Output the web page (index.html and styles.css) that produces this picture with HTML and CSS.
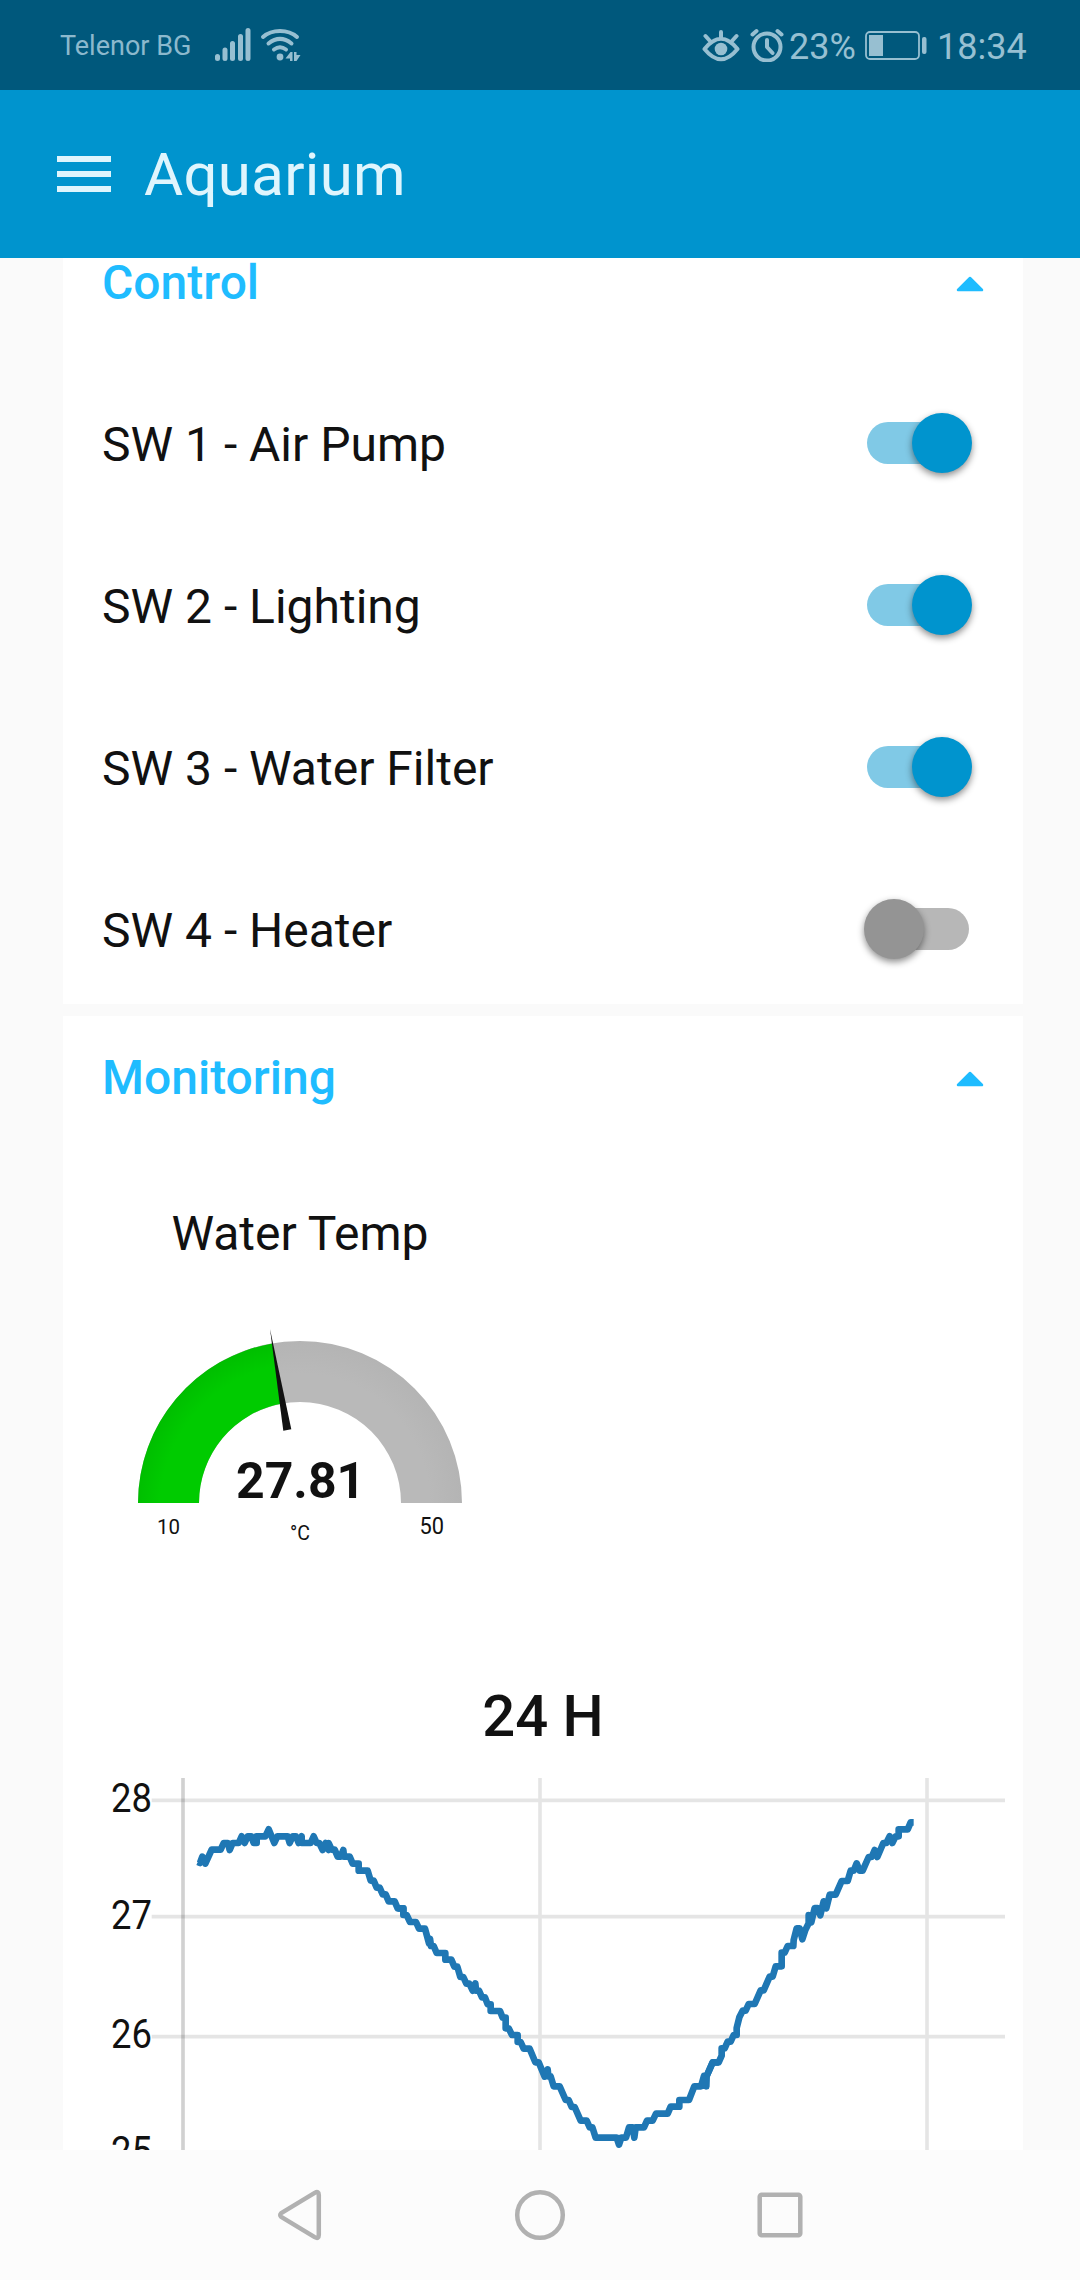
FILE: index.html
```html
<!DOCTYPE html>
<html lang="en">
<head>
<meta charset="utf-8">
<title>Aquarium</title>
<link rel="stylesheet" href="styles.css">
</head>
<body>
<div class="screen">
  <div class="status">
    <span class="carrier">Telenor BG</span>
    <svg class="signal" width="36" height="36" viewBox="0 0 36 36"><path d="M2.500 30.500v2M10 24v8.500M17.500 17.500v15M25.500 10.500v22M33 4.500v28"/></svg>
    <svg class="wifi" width="42" height="36" viewBox="0 0 42 36">
      <path d="M3 11C12 3 28 3 37 11M8.500 17.500C16 11.500 24 11.500 31.500 17.500M14 23.500C18 20.500 22 20.500 26 23.500"/>
      <circle class="solid" cx="20" cy="31" r="3.400"/>
      <path class="solid" d="M25.500 32.500L30.500 26H32.500V35H30V32.500ZM34 26H36.500V29H40.500L36.500 35H34Z"/>
    </svg>
    <span class="spacer"></span>
    <svg class="eye" width="38" height="36" viewBox="0 0 38 36">
      <path d="M2.500 23Q19 2.500 35.500 23Q19 43.500 2.500 23ZM19 6v6M3.500 10l4.500 5M34.500 10l-4.500 5"/>
      <circle class="solid" cx="19" cy="23" r="6.300"/>
    </svg>
    <svg class="alarm" width="34" height="36" viewBox="0 0 34 36">
      <circle cx="17" cy="21" r="13.500"/>
      <path d="M17 14v7l5.500 6M2.500 8.500l4-3.500M31.500 8.500l-4-3.500"/>
    </svg>
    <span class="percent">23%</span>
    <svg class="battery" width="62" height="32" viewBox="0 0 62 32">
      <rect class="case" x="1" y="3" width="53" height="27" rx="4"/>
      <rect class="solid" x="4" y="6" width="14" height="21"/>
      <rect class="solid" x="57" y="8" width="4.500" height="17" rx="2"/>
    </svg>
    <span class="time">18:34</span>
  </div>

  <header class="appbar">
    <button class="menu" aria-label="Menu"><i></i><i></i><i></i></button>
    <h1>Aquarium</h1>
  </header>

  <main class="content">
    <section class="card control">
      <div class="card-head"><h2>Control</h2><svg class="caret" width="28" height="16" viewBox="0 0 28 16"><path d="M14 2L26 14H2Z"/></svg></div>
      <div class="switches">
        <div class="row"><span class="label">SW 1 - Air Pump</span><span class="switch on"><b></b></span></div>
        <div class="row"><span class="label">SW 2 - Lighting</span><span class="switch on"><b></b></span></div>
        <div class="row"><span class="label">SW 3 - Water Filter</span><span class="switch on"><b></b></span></div>
        <div class="row"><span class="label">SW 4 - Heater</span><span class="switch"><b></b></span></div>
      </div>
    </section>

    <section class="card">
      <div class="card-head"><h2>Monitoring</h2><svg class="caret" width="28" height="16" viewBox="0 0 28 16"><path d="M14 2L26 14H2Z"/></svg></div>
      <div class="gauge">
        <p class="gauge-title">Water Temp</p>
        <svg width="350" height="240" viewBox="125 1310 350 240">
          <defs>
            <radialGradient id="green" gradientUnits="userSpaceOnUse" cx="306" cy="1509" r="172"><stop offset=".85" stop-color="#00cb00"/><stop offset="1" stop-color="#00bd00"/></radialGradient>
            <radialGradient id="grey" gradientUnits="userSpaceOnUse" cx="300" cy="1503" r="162"><stop offset=".8" stop-color="#b9b9b9"/><stop offset="1" stop-color="#b4b4b4"/></radialGradient>
          </defs>
          <path fill="url(#grey)" d="M138 1503A162 162 0 0 1 462 1503H401A101 101 0 0 0 199 1503Z"/>
          <path fill="url(#green)" d="M138 1503A162 162 0 0 1 272.300 1343.400L282.700 1403.500A101 101 0 0 0 199 1503Z"/>
          <path fill="#111" d="M270 1329L291.300 1429.300L283.300 1430.700Z"/>
          <text class="value" x="236" y="1498">27.81</text>
          <text class="bound-min" x="157" y="1534" textLength="23" lengthAdjust="spacingAndGlyphs">10</text>
          <text class="unit" x="290" y="1539.500" textLength="20" lengthAdjust="spacingAndGlyphs">°C</text>
          <text class="bound-max" x="419.500" y="1534" textLength="24.500" lengthAdjust="spacingAndGlyphs">50</text>
        </svg>
      </div>
      <h3 class="chart-title">24 H</h3>
      <svg class="chart" width="960" height="382" viewBox="9 324 2880 1146">
        <g class="grid">
          <path d="M275 421H2835M275 770H2835M275 1130H2835M1440 354V1470M2601 354V1470"/>
          <path class="axis" d="M369 354V1470"/>
        </g>
        <g class="ticks">
          <text x="153" y="457" textLength="123" lengthAdjust="spacingAndGlyphs">28</text>
          <text x="153" y="806" textLength="123" lengthAdjust="spacingAndGlyphs">27</text>
          <text x="153" y="1165" textLength="123" lengthAdjust="spacingAndGlyphs">26</text>
          <text x="153" y="1515" textLength="123" lengthAdjust="spacingAndGlyphs">25</text>
        </g>
        <g class="line">
          <polyline points="413,606 420,609 427,590 436,611 455,569 482,569 491,549 504,549 509,570 518,549 536,549 545,529 554,549 563,529 574,529 581,549 590,549 590,529 616,529 626,508 643,549 652,529 683,529 689,549 698,529 708,529 716,549 725,529 725,549 752,549 761,529 770,549 778,549 788,570 797,549 806,570 806,549 815,569 824,569 833,590 842,590 850,570 852,590 869,590 878,611 896,611 896,632 923,632 932,662 941,662 950,683 959,683 968,703 977,703 986,724 1004,724 1013,745 1030,745 1030,765"/>
          <polyline transform="translate(960)" points="53,745 70,745 70,765 80,765 90,786 108,786 117,806 135,806 147,850 150,836 153,858 161,858 170,879 196,879 196,899 214,899 223,920 232,920 241,951 250,951 259,971 268,971 278,992 286,970 288,992 297,992 306,1012 315,1012 323,1033 332,1033 332,1053 360,1053 368,1073 377,1073 377,1105 386,1105 396,1125 413,1125 413,1146 422,1146 431,1166 449,1166 466,1207 476,1207 494,1250 503,1228 505,1249 512,1249 521,1279 539,1279 557,1320 566,1320 575,1341 584,1341 602,1382 620,1382 629,1402 637,1402 647,1433 710,1433 717,1454 724,1433 738,1433 747,1402 758,1402 763,1433 767,1402 792,1402 801,1382 818,1382 828,1361 863,1361 872,1340 898,1340 898,1320 927,1320 943,1279 963,1279 972,1248 979,1279 980,1248 998,1207 1016,1207"/>
          <polyline transform="translate(1860 300)" points="80,948 98,907 116,907 125,887 125,865 134,865 143,845 152,845 161,825 170,825 170,804 178,772 188,752 197,752 206,732 224,732 242,691 251,691 269,650 278,650 287,619 305,619 305,578 314,578 323,558 340,558 341,540 350,505 359,505 367,538 376,510 386,490 386,465 394,487 404,444 413,444 421,466 431,424 439,445 449,404 467,404 485,363 503,363 512,332 521,332 530,310 539,332 548,332 566,291 575,291 584,270 592,291 610,249 619,249 629,229 637,249 647,229 656,229 656,208 683,208 692,187 701,187"/>
        </g>
      </svg>
    </section>
  </main>

  <nav class="navbar">
    <svg width="60" height="60" viewBox="0 0 60 60"><path d="M11.200 28.200L44.700 7.900Q48.800 5.600 48.800 10V50Q48.800 54.400 44.700 52.100L11.200 31.800Q9.200 30 11.200 28.200Z"/></svg>
    <svg width="60" height="60" viewBox="0 0 60 60"><circle cx="30" cy="30" r="22.800"/></svg>
    <svg width="60" height="60" viewBox="0 0 60 60"><rect x="9.700" y="9.700" width="40.600" height="40.600" rx="2"/></svg>
  </nav>
</div>
</body>
</html>
```
FILE: styles.css
```css
* { box-sizing: border-box; }
body { margin: 0; font-family: Roboto, "Noto Sans", sans-serif; color: #111; background: #fafafa; }
h1, h2, h3, p { margin: 0; font-weight: 400; }
.screen { width: 1080px; height: 2280px; display: flex; flex-direction: column; overflow: hidden; }

.status { height: 90px; flex: none; display: flex; align-items: center; padding: 2px 54px 0 60px; background: #00587c; color: #97c0d2; white-space: nowrap; }
.status svg { fill: none; stroke: #97bfd1; stroke-width: 4; stroke-linecap: round; stroke-linejoin: round; flex: none; }
.status .signal { margin-left: 24px; stroke-width: 5; margin-top: -4px; }
.status .wifi { margin-left: 9px; margin-top: -4px; }
.status .solid { fill: #97bfd1; stroke: none; }
.status .case { stroke-width: 1.800; }
.status .eye { margin-top: -4px; }
.status .alarm { margin-left: 10px; margin-top: -4px; }
.status .battery { margin-left: 11px; margin-top: -2px; }
.carrier { font-size: 27px; color: #8cb9cd; width: 131px; }
.spacer { flex: 1; }
.percent { font-size: 36px; margin-left: 5px; width: 65px; padding-top: 2px; }
.time { font-size: 36px; margin-left: 10px; width: 89px; padding-top: 2px; }

.appbar { height: 168px; flex: none; display: flex; align-items: center; gap: 33px; padding: 0 57px; background: #0094ce; color: #dff5fd; }
.menu { width: 54px; padding: 0; border: 0; background: none; display: flex; flex-direction: column; gap: 9px; }
.menu i { height: 6px; background: #dff5fd; }
.appbar h1 { font-size: 60px; letter-spacing: .3px; }

.content { flex: 1; min-height: 0; overflow: hidden; display: flex; flex-direction: column; gap: 12px; padding: 0 57px 0 63px; }
.card { flex: none; background: #fff; }
.control { margin-top: -37px; padding-bottom: 3px; }
.card-head { height: 122px; display: flex; align-items: center; justify-content: space-between; padding: 0 39px; color: #1fbcff; }
.card-head h2 { font-size: 48px; font-weight: 500; }
.caret { fill: #1fbcff; stroke: #1fbcff; stroke-width: 2.500; stroke-linejoin: round; margin-top: 4px; }
.switches { display: flex; flex-direction: column; gap: 18px; margin-top: 28px; }
.row { height: 144px; display: flex; align-items: center; justify-content: space-between; padding: 0 51px 0 39px; font-size: 48px; }
.label { padding-top: 2px; }
.switch { width: 108px; height: 60px; display: flex; align-items: center; position: relative; }
.switch::before { content: ""; width: 102px; height: 42px; margin: 0 3px; border-radius: 21px; background: #b7b7b7; }
.switch b { position: absolute; left: 0; top: 0; width: 60px; height: 60px; border-radius: 50%; background: #949494; box-shadow: 0 3px 7px rgba(0, 0, 0, .45); }
.switch.on::before { background: #80c9e6; }
.switch.on b { left: 48px; background: #0094ce; }

.gauge { width: 474px; display: flex; flex-direction: column; align-items: center; padding-top: 68px; }
.gauge-title { font-size: 48px; line-height: 56px; }
.gauge svg { margin-top: 48px; }
.value { font-size: 50px; font-weight: 700; letter-spacing: 0; fill: #111; }
.bound-min { font-size: 21px; fill: #111; }
.unit { font-size: 20px; fill: #111; }
.bound-max { font-size: 23px; fill: #111; }
.chart-title { margin-top: 131px; font-size: 58px; line-height: 70px; font-weight: 500; text-align: center; }
.chart { display: block; margin-top: 17px; }
.grid { fill: none; stroke: #000; stroke-opacity: .1; stroke-width: 11; }
.grid .axis { stroke-opacity: .18; }
.ticks { font-size: 124px; fill: #111; }
.line { fill: none; stroke: #1f77b4; stroke-width: 20; stroke-linejoin: round; }

.navbar { height: 130px; flex: none; display: flex; align-items: center; justify-content: center; gap: 180px; background: #fcfcfc; }
.navbar svg { fill: none; stroke: #b1b1b1; stroke-width: 4.500; stroke-linejoin: round; }
```
